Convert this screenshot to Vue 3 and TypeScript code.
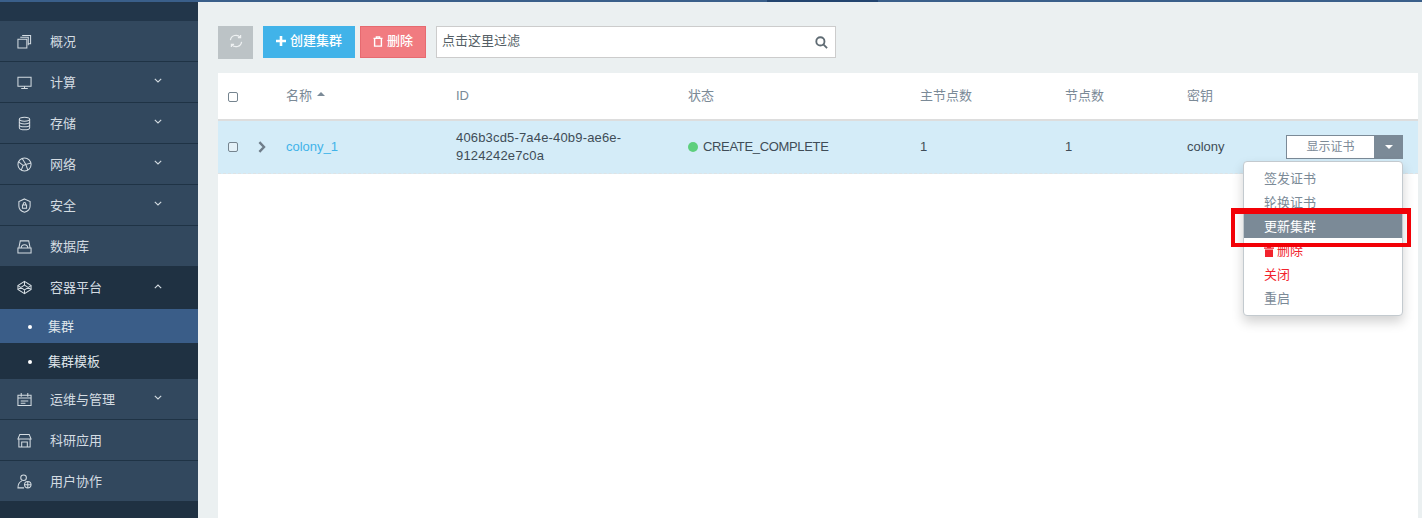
<template>
  <div class="page">
    <div class="top-strip">
      <span class="strip-gap"></span>
      <span class="strip-dark"></span>
    </div>
    <div class="layout">
      <aside class="sidebar">
        <div class="side-head"></div>
        <template v-for="item in menu" :key="item.label">
          <div class="nav-group" :class="{ open: item.children }">
            <div class="nav-item">
              <svg class="nav-icon" viewBox="0 0 16 16" fill="none" stroke="currentColor" stroke-width="1.1">
                <path v-for="d in item.icon" :key="d" :d="d" />
              </svg>
              <span class="nav-label">{{ item.label }}</span>
              <svg v-if="item.arrow" class="nav-arrow" viewBox="0 0 8 5" fill="none" stroke="currentColor" stroke-width="1.1">
                <path :d="item.children ? 'M.8 4.2 4 1l3.2 3.2' : 'M.8 .8 4 4l3.2-3.2'" />
              </svg>
            </div>
            <div
              v-for="(sub, i) in item.children"
              :key="sub"
              class="sub-item"
              :class="{ active: i === 0 }"
            >
              <i class="dot"></i>{{ sub }}
            </div>
          </div>
        </template>
      </aside>

      <main class="content">
        <div class="toolbar">
          <button class="btn btn-refresh" aria-label="刷新">
            <svg width="14" height="14" viewBox="0 0 14 14" fill="none" stroke="#eef1f2" stroke-width="1.2">
              <path d="M1.4 6.200A5.600 5.600 0 0 1 11.300 3.400M12.600 7.800A5.600 5.600 0 0 1 2.700 10.600" />
              <path d="M11.600 1v2.700H8.900M2.400 13v-2.700h2.700" />
            </svg>
          </button>
          <button class="btn btn-create">
            <svg class="plus" viewBox="0 0 10 10" fill="#fff"><path d="M3.700 0h2.600v3.700H10v2.600H6.300V10H3.700V6.300H0V3.700h3.700z" /></svg>
            创建集群
          </button>
          <button class="btn btn-delete">
            <svg class="trash" viewBox="0 0 10 11" fill="none" stroke="currentColor" stroke-width="1.4">
              <path d="M.5 2.400h9M3.400 2.200V.9h3.200v1.300M1.600 2.600v7.500h6.800V2.600" />
            </svg>
            删除
          </button>
          <div class="filter">
            <span>点击这里过滤</span>
            <svg width="13" height="13" viewBox="0 0 14 14" fill="none" stroke="#5f6b73" stroke-width="2">
              <circle cx="5.800" cy="5.800" r="4.400" />
              <path d="m9 9 4 4" />
            </svg>
          </div>
        </div>

        <section class="panel">
          <div class="grid head-row">
            <div class="cell"><i class="check"></i></div>
            <div class="cell"></div>
            <div class="cell">名称 <i class="sort"></i></div>
            <div class="cell">ID</div>
            <div class="cell">状态</div>
            <div class="cell">主节点数</div>
            <div class="cell">节点数</div>
            <div class="cell">密钥</div>
            <div class="cell"></div>
          </div>

          <div class="grid body-row">
            <div class="cell"><i class="check"></i></div>
            <div class="cell">
              <svg width="8" height="12" viewBox="0 0 8 12" fill="none" stroke="#6f7d8a" stroke-width="2.400">
                <path d="m1.400 1.200 4.600 4.800-4.600 4.800" />
              </svg>
            </div>
            <div class="cell"><a class="link">{{ cluster.name }}</a></div>
            <div class="cell id-cell">{{ cluster.id }}</div>
            <div class="cell status-cell"><i class="status-dot"></i>{{ cluster.status }}</div>
            <div class="cell">{{ cluster.masters }}</div>
            <div class="cell">{{ cluster.nodes }}</div>
            <div class="cell">{{ cluster.keypair }}</div>
            <div class="cell action-cell">
              <div class="split">
                <span class="split-main">显示证书</span>
                <span class="split-caret"><i></i></span>
              </div>
              <ul class="dropdown">
                <li
                  v-for="action in actions"
                  :key="action.label"
                  :class="{ danger: action.danger, selected: action.selected }"
                >
                  <svg v-if="action.trash" class="trash-red" viewBox="0 0 10 11" fill="currentColor">
                    <path d="M0 1.500h10v1.300H0zM3 0h4v1.500H3zM1 3.400h8V11H1z" />
                  </svg>
                  {{ action.label }}
                </li>
                <li class="mark" aria-hidden="true"></li>
              </ul>
            </div>
          </div>
        </section>
      </main>
    </div>
  </div>
</template>

<script setup lang="ts">
interface MenuItem {
  label: string;
  icon: string[];
  arrow?: boolean;
  children?: string[];
}

interface Action {
  label: string;
  danger?: boolean;
  selected?: boolean;
  trash?: boolean;
}

const menu: MenuItem[] = [
  {
    label: "概况",
    icon: [
      "M5.500 1.500h9v9H12",
      "M3.500 3.500H12v8.500",
      "M1 5.500h9.500v9.500H1z",
    ],
  },
  {
    label: "计算",
    arrow: true,
    icon: ["M1 2.500h14v9.500H1z", "M8 12v2.500M4.500 14.500h7"],
  },
  {
    label: "存储",
    arrow: true,
    icon: [
      "M2.500 3.500C2.500 .6 13.500 .6 13.500 3.500v9C13.500 15.400 2.500 15.400 2.500 12.500z",
      "M2.500 3.500C2.500 6.200 13.500 6.200 13.500 3.500M2.500 6.500C2.500 9.200 13.500 9.200 13.500 6.500M2.500 9.500C2.500 12.200 13.500 12.200 13.500 9.500",
    ],
  },
  {
    label: "网络",
    arrow: true,
    icon: [
      "M8 1a7 7 0 1 0 0 14A7 7 0 0 0 8 1z",
      "M5.500 1.500 9.500 8l5.500-1.500M1.500 5 6.500 9l-2 5M9.500 8l-3 1M9.500 8l2 6",
    ],
  },
  {
    label: "安全",
    arrow: true,
    icon: [
      "M8 1 14 3.800v4.700C14 11.500 11.200 14.200 8 15.200 4.800 14.200 2 11.500 2 8.500V3.800z",
      "M5.800 7.500h4.400v3.500H5.800zM6.700 7.500V6a1.300 1.300 0 0 1 2.600 0v1.500",
    ],
  },
  {
    label: "数据库",
    icon: [
      "M1 9.500v5.500h14V9.500z",
      "M2 9.500 3.500 2h9L14 9.500",
      "M4.500 9.500C4.500 5 11.500 5 11.500 9.500",
    ],
  },
  {
    label: "容器平台",
    arrow: true,
    children: ["集群", "集群模板"],
    icon: [
      "M8 1.500 15 6v4l-7 4.500L1 10V6z",
      "M1 6l7 4.500L15 6M1 10l7-4.500 7 4.500M8 1.500v4M8 10.500v4",
    ],
  },
  {
    label: "运维与管理",
    arrow: true,
    icon: [
      "M1 3.500h14v11H1z",
      "M1 6.500h14M4.500 1v4M11.500 1v4M4 9.500h8M4 12h5",
    ],
  },
  {
    label: "科研应用",
    icon: [
      "M3 1.500h10l2 5H1z",
      "M2 6.500v8.500h12V6.500",
      "M5 15V9.500h6V15",
    ],
  },
  {
    label: "用户协作",
    icon: [
      "M7 1a3 3 0 1 0 0 6 3 3 0 0 0 0-6z",
      "M7.500 14.800H1c0-3.800 1.600-6.300 4.200-7.500",
      "M11.500 8a3.500 3.500 0 1 0 0 7 3.500 3.500 0 0 0 0-7zM8 11.500h7M11.500 8v7",
    ],
  },
];

const cluster = {
  name: "colony_1",
  id: "406b3cd5-7a4e-40b9-ae6e-9124242e7c0a",
  status: "CREATE_COMPLETE",
  masters: 1,
  nodes: 1,
  keypair: "colony",
};

const actions: Action[] = [
  { label: "签发证书" },
  { label: "轮换证书" },
  { label: "更新集群", selected: true },
  { label: "删除", danger: true, trash: true },
  { label: "关闭", danger: true },
  { label: "重启" },
];
</script>

<style>
html,
body {
  margin: 0;
  height: 100%;
  overflow: hidden;
}
</style>

<style scoped>
.page {
  height: 518px;
  display: flex;
  flex-direction: column;
  font-family: "Liberation Sans", "Noto Sans CJK SC", sans-serif;
  font-size: 13px;
  line-height: 18.5px;
  background: #ebf0f1;
}

.top-strip {
  height: 2px;
  flex: none;
  display: flex;
  background: #3a5f8a;
}

.strip-gap {
  width: 767px;
}

.strip-dark {
  width: 111px;
  background: #23456f;
}

.layout {
  flex: 1;
  display: flex;
  min-height: 0;
}

/* sidebar */
.sidebar {
  width: 198px;
  flex: none;
  background: #1f3142;
  color: #d4dce2;
}

.side-head {
  height: 19px;
  background: #22364a;
}

.nav-group {
  background: #32485e;
}

.nav-group.open {
  background: #1f3142;
}

.nav-item {
  height: 41px;
  box-sizing: border-box;
  display: flex;
  align-items: center;
  padding-left: 17px;
  border-bottom: 1px solid #1f3345;
}

.nav-group.open .nav-item {
  height: 43px;
  border-bottom: none;
}

.nav-group:last-child .nav-item,
.nav-group:has(+ .open) .nav-item {
  height: 40px;
  border-bottom: none;
}

.nav-icon {
  width: 15px;
  height: 15px;
  flex: none;
}

.nav-label {
  margin-left: 18px;
  padding-top: 2px;
  flex: 1;
}

.nav-arrow {
  width: 8px;
  height: 5px;
  margin-right: 36px;
  margin-bottom: 3px;
}

.sub-item {
  height: 36px;
  box-sizing: border-box;
  padding-top: 2px;
  display: flex;
  align-items: center;
  padding-left: 28px;
  color: #dfe5ea;
}

.sub-item.active {
  height: 34px;
  background: #3a5d88;
}

.dot {
  width: 4px;
  height: 4px;
  border-radius: 50%;
  background: #fff;
  margin-right: 16px;
}

/* toolbar */
.content {
  flex: 1;
  min-width: 0;
  display: flex;
  flex-direction: column;
  padding: 24px 4px 0 20px;
}

.toolbar {
  display: flex;
  align-items: flex-start;
  margin-bottom: 14px;
}

.btn {
  height: 32px;
  border: 1px solid transparent;
  padding: 0 0 2px;
  display: flex;
  align-items: center;
  justify-content: center;
  font: inherit;
  color: #fff;
  font-weight: 500;
}

.btn-refresh {
  width: 35px;
  height: 33px;
  background: #bcc3c6;
  margin-right: 10px;
  padding-bottom: 4px;
}

.btn-create {
  width: 92px;
  background: #41b3e9;
  margin-right: 5px;
}

.plus {
  width: 10px;
  height: 10px;
  margin-right: 4px;
}

.btn-delete {
  width: 66px;
  background: #f17b80;
  border-color: #e66a70;
  margin-right: 10px;
}

.trash {
  width: 10px;
  height: 11px;
  margin-right: 4px;
}

.filter {
  width: 400px;
  height: 32px;
  box-sizing: border-box;
  border: 1px solid #cccccc;
  background: #fff;
  display: flex;
  align-items: center;
  justify-content: space-between;
  padding: 0 7px 2px 5px;
  color: #555f66;
}

.filter svg {
  margin-top: 3px;
}

/* table */
.panel {
  flex: 1;
  background: #fff;
}

.grid {
  display: grid;
  grid-template-columns: 40px 28px 170px 232px 232px 145px 122px 99px 1fr;
  align-items: center;
}

.cell {
  display: flex;
  align-items: center;
  min-width: 0;
}

.head-row {
  height: 48px;
  box-sizing: border-box;
  padding-top: 1px;
  border-bottom: 2px solid #dddddd;
  color: #7b8a97;
}

.body-row {
  height: 53px;
  box-sizing: border-box;
  background: #d4ecf8;
  color: #3f4c57;
  border-bottom: 1px dashed #dfe3e5;
}

.check {
  display: block;
  width: 8px;
  height: 8px;
  margin-left: 10px;
  border: 1px solid #75848f;
  border-radius: 2px;
  background: #fff;
}

.body-row .check {
  background: #e4f1f8;
}

.sort {
  display: block;
  margin: 0 0 6px 5px;
  border: 4.500px solid transparent;
  border-top: none;
  border-bottom: 4px solid #7b8a97;
}

.link {
  color: #41b3e9;
}

.id-cell {
  padding-right: 50px;
  letter-spacing: 0.17px;
}

.status-cell {
  letter-spacing: -0.33px;
}

.status-dot {
  width: 10px;
  height: 10px;
  border-radius: 50%;
  background: #5dcf7d;
  margin-right: 5px;
}

.action-cell {
  position: relative;
}

.split {
  display: flex;
  width: 117px;
  height: 24px;
}

.split-main {
  flex: 1;
  display: flex;
  align-items: center;
  justify-content: center;
  background: #fff;
  border: 1px solid #7b8a97;
  color: #7b8a97;
  font-size: 12px;
}

.split-caret {
  width: 28px;
  background: #7b8a97;
  display: flex;
  align-items: center;
  justify-content: center;
}

.split-caret i {
  border: 4px solid transparent;
  border-bottom: none;
  border-top: 4px solid #fff;
}

.dropdown {
  position: absolute;
  z-index: 5;
  top: 26px;
  left: -43px;
  width: 160px;
  box-sizing: border-box;
  list-style: none;
  margin: 0;
  padding: 4px 0 5px;
  background: #fff;
  border: 1px solid #c3cacf;
  border-radius: 4px;
  box-shadow: 0 6px 12px rgba(0, 0, 0, 0.18);
  color: #7b8a97;
}

.dropdown li {
  height: 24px;
  box-sizing: border-box;
  padding-top: 3px;
  display: flex;
  align-items: center;
  padding-left: 20px;
}

.dropdown .danger {
  color: #f2232d;
}

.dropdown .selected {
  background: #7b8a97;
  color: #fff;
}

.trash-red {
  width: 10px;
  height: 11px;
  margin-right: 3px;
}

.dropdown .mark {
  position: absolute;
  top: 46px;
  left: -13px;
  width: 180px;
  height: 39px;
  box-sizing: border-box;
  padding: 0;
  border: 4px solid #f20006;
  border-top-width: 6px;
}
</style>
